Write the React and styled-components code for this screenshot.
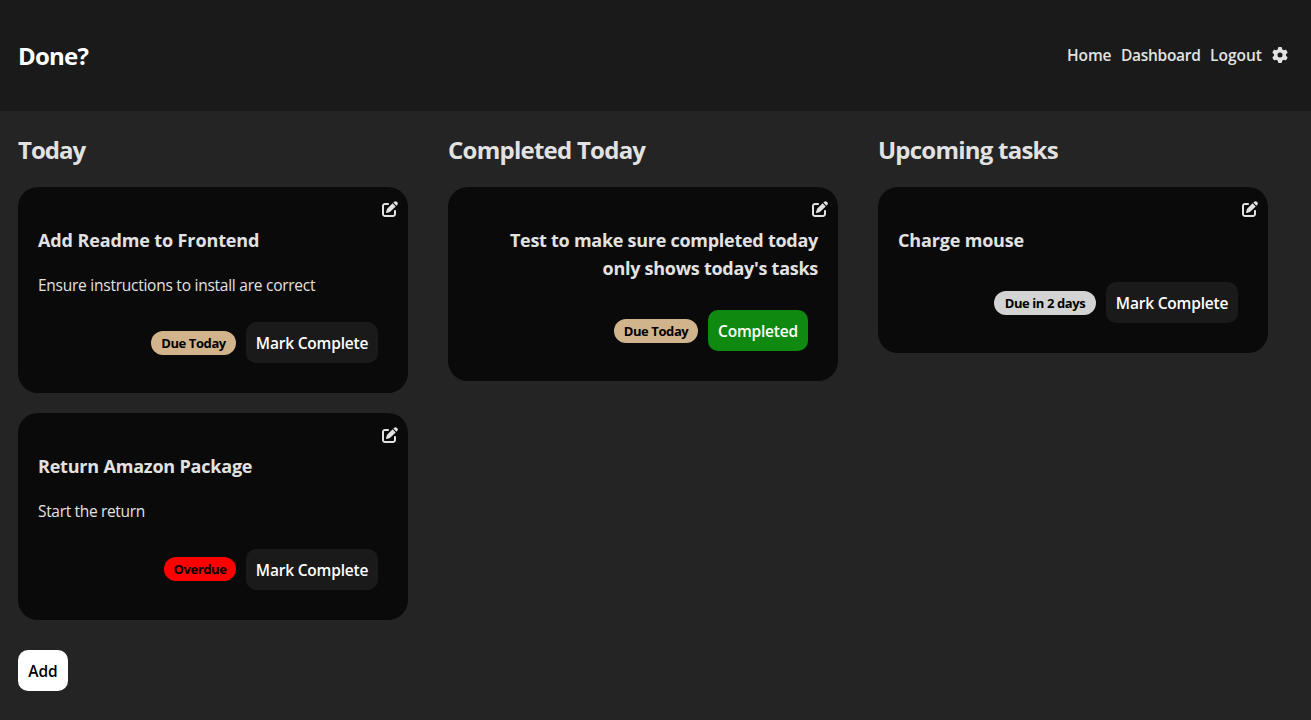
import React from "react";
import styled, { createGlobalStyle } from "styled-components";
import { FaGear, FaPenToSquare } from "react-icons/fa6";

const GlobalStyle = createGlobalStyle`
  *, *::before, *::after { box-sizing: border-box; }
  body {
    margin: 0;
    min-height: 100vh;
    background: #242424;
    color: #e2e2e2;
    font-family: "Open Sans", "Noto Sans", sans-serif;
    font-size: 16px;
    line-height: 1.5;
  }
`;

const Header = styled.header`
  display: flex;
  align-items: center;
  justify-content: space-between;
  height: 111px;
  padding: 0 23px 0 18px;
  background: #1a1a1a;
`;

const Brand = styled.h2`
  margin: 0;
  color: #fff;
  font-size: 24px;
  font-weight: 700;
  letter-spacing: -0.8px;
`;

const Nav = styled.nav`
  display: flex;
  align-items: center;
  gap: 10px;

  svg { display: block; margin-bottom: 1px; }
`;

const NavLink = styled.a`
  width: ${(p) => p.$width}px;
  font-size: 15.5px;
  font-weight: 600;
  letter-spacing: ${(p) => p.$track || 0}px;
  white-space: nowrap;
`;

const Board = styled.main`
  display: flex;
  align-items: flex-start;
  gap: 40px;
  padding: 21px 18px 0;
`;

const Column = styled.section`
  display: flex;
  flex-direction: column;
  gap: 20px;
  width: 390px;
`;

const ColumnTitle = styled.h2`
  margin: 0 0 -1px;
  font-size: 24px;
  font-weight: 700;
  letter-spacing: ${(p) => p.$track}px;
  white-space: nowrap;
`;

const Card = styled.article`
  position: relative;
  padding: 20px;
  border-radius: 20px;
  background: #0a0a0a;
`;

const EditButton = styled.span`
  position: absolute;
  top: 14px;
  right: 10px;

  svg { display: block; }
`;

const CardTitle = styled.h3`
  margin: 18.72px 0;
  font-size: 18px;
  line-height: 28.08px;
  font-weight: 700;
  letter-spacing: ${(p) => p.$track}px;
  text-align: ${(p) => p.$align || "left"};
  white-space: pre-line;
`;

const Description = styled.p`
  margin: 0 0 16px;
  font-size: 15.5px;
  line-height: 24px;
  letter-spacing: ${(p) => p.$track}px;
`;

const Actions = styled.div`
  display: flex;
  align-items: center;
  justify-content: flex-end;
  gap: 10px;
  padding: 9.8px 10px 10px;
`;

const pillColors = { today: "#d2b48c", overdue: "#ff0000", later: "#d3d3d3" };

const Pill = styled.span`
  display: flex;
  align-items: center;
  justify-content: center;
  width: ${(p) => p.$width}px;
  height: 24px;
  padding-top: 1px;
  border-radius: 12px;
  background: ${(p) => pillColors[p.$kind]};
  color: #000;
  font-size: 13px;
  font-weight: 700;
  letter-spacing: ${(p) => p.$track}px;
  white-space: nowrap;
`;

const buttonColors = {
  mark: ["#1a1a1a", "#fff"],
  done: ["#0f890f", "#fff"],
  add: ["#fff", "#000"],
};

const Button = styled.button`
  flex: none;
  width: ${(p) => p.$width}px;
  height: 41px;
  padding: 1px 0 0;
  border: 0;
  border-radius: 10px;
  background: ${(p) => buttonColors[p.$kind][0]};
  color: ${(p) => buttonColors[p.$kind][1]};
  font-family: inherit;
  font-size: 15.5px;
  font-weight: 600;
  letter-spacing: ${(p) => p.$track}px;
  white-space: nowrap;
`;

const AddButton = styled(Button)`
  margin-top: 10px;
`;

const columns = [
  {
    title: "Today",
    track: -1,
    canAdd: true,
    tasks: [
      { title: "Add Readme to Frontend", track: -0.12, text: "Ensure instructions to install are correct", textTrack: -0.25, due: "Due Today", kind: "today", pill: 85 },
      { title: "Return Amazon Package", track: -0.2, text: "Start the return", textTrack: -0.33, due: "Overdue", kind: "overdue", pill: 72 },
    ],
  },
  {
    title: "Completed Today",
    track: -0.75,
    tasks: [
      { title: "Test to make sure completed today\nonly shows today's tasks", track: -0.27, align: "right", due: "Due Today", kind: "today", pill: 84, done: true },
    ],
  },
  {
    title: "Upcoming tasks",
    track: -0.77,
    tasks: [{ title: "Charge mouse", track: -0.17, due: "Due in 2 days", kind: "later", pill: 102 }],
  },
];

function TaskCard({ task }) {
  return (
    <Card>
      <EditButton><FaPenToSquare size={16} /></EditButton>
      <CardTitle $track={task.track} $align={task.align}>{task.title}</CardTitle>
      {task.text && <Description $track={task.textTrack}>{task.text}</Description>}
      <Actions>
        <Pill $kind={task.kind} $width={task.pill} $track={-0.4}>{task.due}</Pill>
        {task.done
          ? <Button $kind="done" $width={100} $track={-0.2}>Completed</Button>
          : <Button $kind="mark" $width={132} $track={-0.2}>Mark Complete</Button>}
      </Actions>
    </Card>
  );
}

export default function App() {
  return (
    <>
      <GlobalStyle />
      <Header>
        <Brand>Done?</Brand>
        <Nav>
          <NavLink $width={44} $track={-0.1}>Home</NavLink>
          <NavLink $width={79} $track={-0.3}>Dashboard</NavLink>
          <NavLink $width={52} $track={0}>Logout</NavLink>
          <FaGear size={16} />
        </Nav>
      </Header>
      <Board>
        {columns.map((c) => (
          <Column key={c.title}>
            <ColumnTitle $track={c.track}>{c.title}</ColumnTitle>
            {c.tasks.map((t) => <TaskCard key={t.title} task={t} />)}
            {c.canAdd && <AddButton $kind="add" $width={50} $track={0}>Add</AddButton>}
          </Column>
        ))}
      </Board>
    </>
  );
}
